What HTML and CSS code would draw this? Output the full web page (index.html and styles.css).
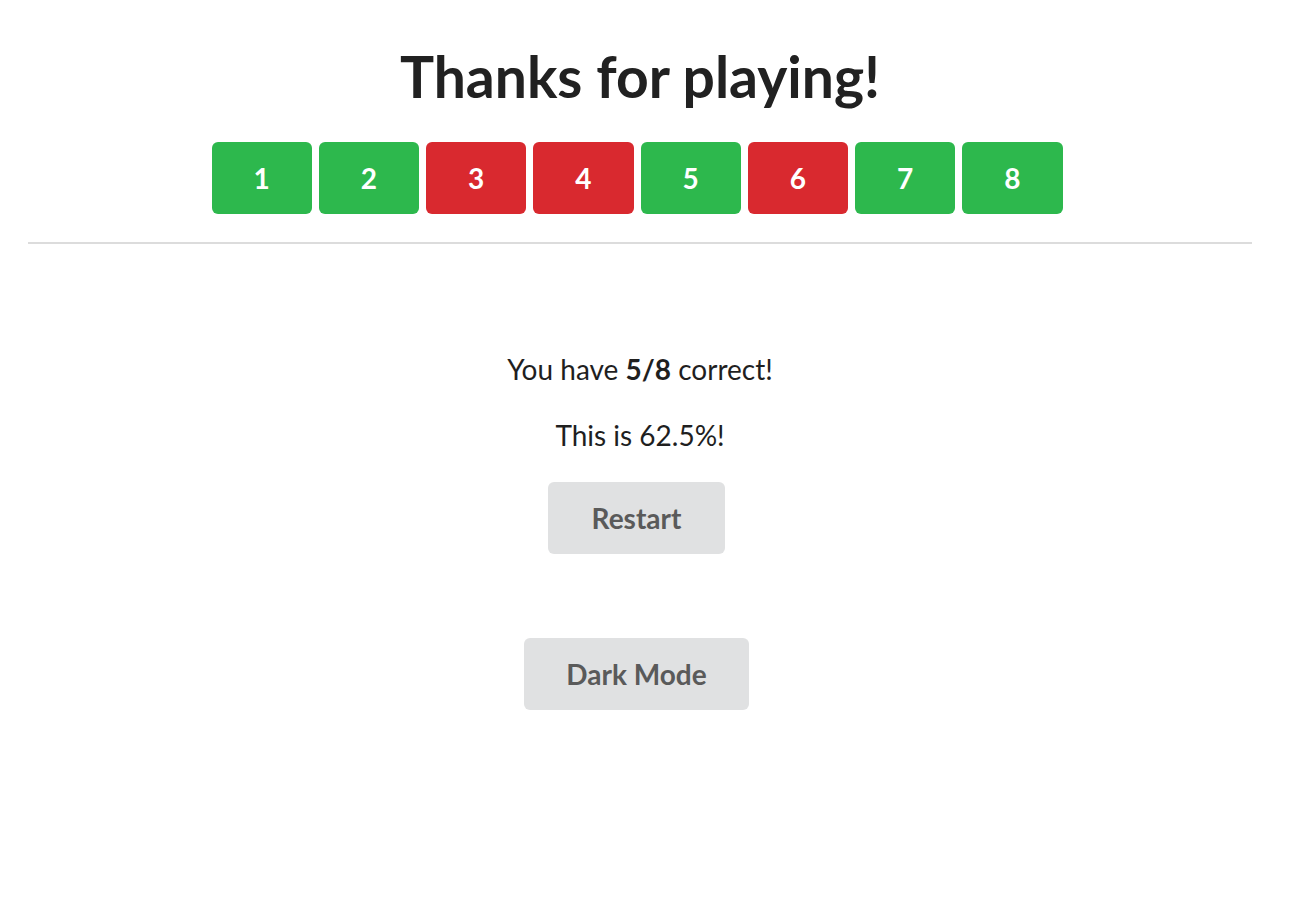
FILE: index.html
```html
<!DOCTYPE html>
<html>
<head>
<meta charset="utf-8">
<link rel="stylesheet" href="styles.css">
</head>
<body>
<div class="page">
  <header class="header">
    <h1 class="title">Thanks for playing!</h1>
    <div class="answers">
      <button class="btn answer correct">1</button>
      <button class="btn answer correct">2</button>
      <button class="btn answer wrong">3</button>
      <button class="btn answer wrong">4</button>
      <button class="btn answer correct">5</button>
      <button class="btn answer wrong">6</button>
      <button class="btn answer correct">7</button>
      <button class="btn answer correct">8</button>
    </div>
  </header>
  <hr class="divider">
  <main class="results">
    <p class="line">You have <b>5/8</b> correct!</p>
    <p class="line">This is 62.5%!</p>
    <button class="btn plain">Restart</button>
    <button class="btn plain dark-toggle">Dark Mode</button>
  </main>
</div>
</body>
</html>
```
FILE: styles.css
```css
html, body {
  margin: 0;
  padding: 0;
  background: #ffffff;
}
body {
  font-family: Lato, "Helvetica Neue", Arial, sans-serif;
  color: #212121;
}
.page {
  width: 1224px;
  padding: 0 0 0 28px;
}
.header {
  display: flex;
  flex-direction: column;
  align-items: center;
  padding-top: 40px;
}
.title {
  margin: 0;
  font-size: 57px;
  font-weight: 700;
  line-height: 1.2857;
  color: #212121;
}
.answers {
  display: flex;
  margin-top: 29px;
  padding-left: 1px;
}
.btn {
  font-family: Lato, "Helvetica Neue", Arial, sans-serif;
  font-size: 28px;
  font-weight: 700;
  line-height: 1;
  min-height: 1em;
  padding: 0.7857em 1.5em;
  margin: 0 0.25em 0 0;
  border: none;
  border-radius: 6px;
  cursor: pointer;
}
.answer {
  color: #ffffff;
}
.correct {
  background: #2db84d;
}
.wrong {
  background: #d9292f;
}
.divider {
  margin: 28px 0 0;
  border: none;
  border-top: 2px solid #dcdcdc;
  height: 0;
}
.results {
  display: flex;
  flex-direction: column;
  align-items: center;
  padding-top: 106px;
}
.line {
  margin: 0 0 28px;
  font-size: 28px;
  line-height: 38px;
  color: #1f1f1f;
}
.line b {
  font-weight: 700;
}
.plain {
  background: #e0e1e2;
  color: #5a5a5a;
  padding-left: 1.57em;
  padding-right: 1.57em;
}
.dark-toggle {
  margin-top: 84px;
  padding-left: 1.5em;
  padding-right: 1.5em;
}
```
